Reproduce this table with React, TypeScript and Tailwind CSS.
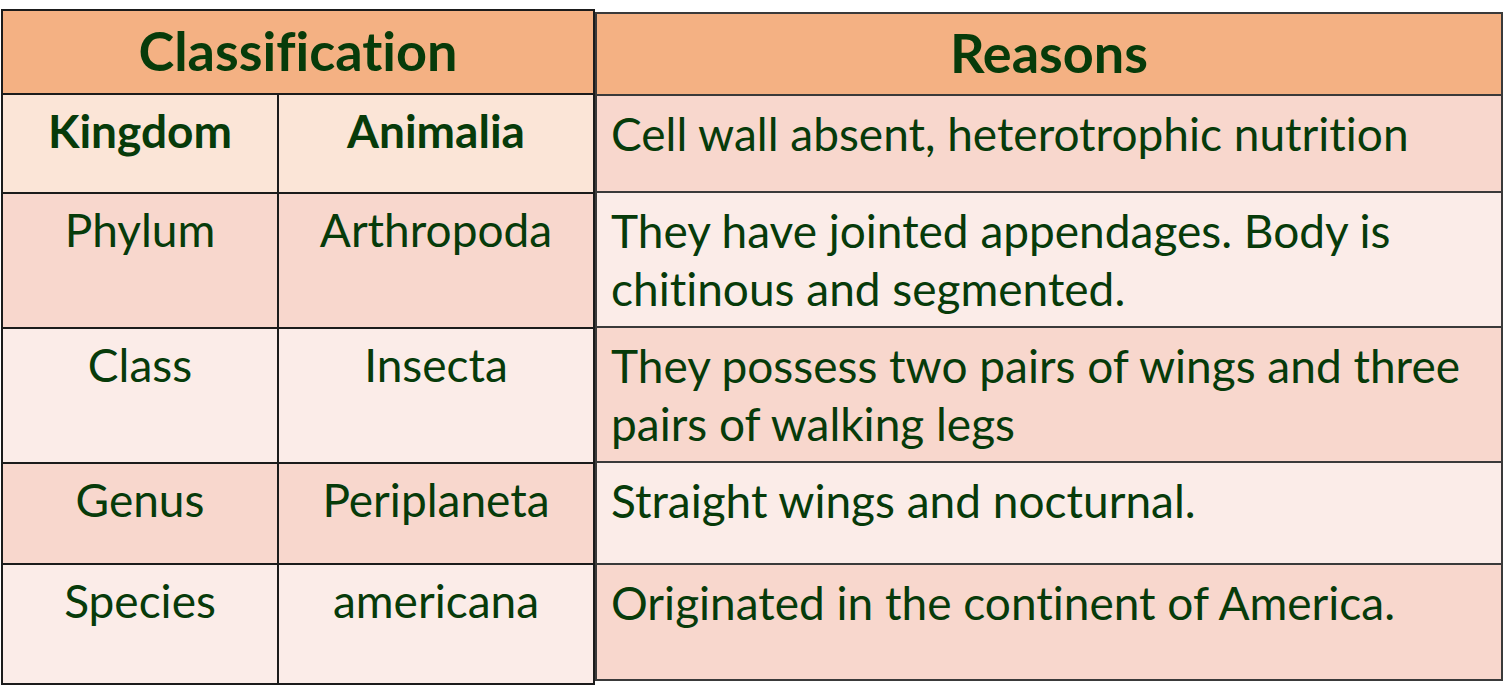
import React from "react";

type Row = {
  rank: string;
  name: string;
  reason: string[];
  bg: string;
  leftH: string;
  rightH: string;
  bold?: boolean;
};

const PINK = "bg-[#f8d7cd]";
const LIGHT = "bg-[#fbece8]";

// heights include the 2px bottom border (border-box)
const rows: Row[] = [
  { rank: "Kingdom", name: "Animalia", reason: ["Cell wall absent, heterotrophic nutrition"], bg: "bg-[#fbe5d7]", leftH: "h-[99px]", rightH: "h-[97px]", bold: true },
  { rank: "Phylum", name: "Arthropoda", reason: ["They have jointed appendages. Body is", "chitinous and segmented."], bg: PINK, leftH: "h-[135px]", rightH: "h-[135px]" },
  { rank: "Class", name: "Insecta", reason: ["They possess two pairs of wings and three", "pairs of walking legs"], bg: LIGHT, leftH: "h-[135px]", rightH: "h-[135px]" },
  { rank: "Genus", name: "Periplaneta", reason: ["Straight wings and nocturnal."], bg: PINK, leftH: "h-[101px]", rightH: "h-[102px]" },
  { rank: "Species", name: "americana", reason: ["Originated in the continent of America."], bg: LIGHT, leftH: "h-[118px]", rightH: "h-[114px]" },
];

// right column colours alternate differently from the left one
const reasonBg = [PINK, LIGHT, PINK, LIGHT, PINK];

export default function App() {
  return (
    <div className="w-[1504px] h-[688px] bg-white overflow-hidden flex items-start pl-px text-[#073b0a] font-['Lato',sans-serif] [font-variant-ligatures:none]">
      {/* Classification table */}
      <div className="mt-[9px] w-[594px] border-2 border-[#1b1b1b] flex flex-col">
        <div className="h-[84px] border-b-2 border-[#1b1b1b] bg-[#f4b183] flex items-center justify-center">
          <span className="text-[54px] font-bold leading-none pb-[2px]">Classification</span>
        </div>
        {rows.map((r, i) => (
          <div
            key={r.rank}
            className={`flex ${r.leftH} ${r.bg} ${i < rows.length - 1 ? "border-b-2 border-[#1b1b1b]" : ""}`}
          >
            <div className={`w-[276px] border-r-2 border-[#1b1b1b] text-center pt-[7px] text-[46px] leading-[58px] ${r.bold ? "font-bold" : ""}`}>
              {r.rank}
            </div>
            <div className={`flex-1 text-center pt-[7px] text-[46px] leading-[58px] ${r.bold ? "font-bold" : ""}`}>
              {r.name}
            </div>
          </div>
        ))}
      </div>

      {/* Reasons table */}
      <div className="mt-[12px] w-[908px] border-2 border-[#3a3a3a] flex flex-col">
        <div className="h-[82px] border-b-2 border-[#3a3a3a] bg-[#f4b183] flex items-center justify-center">
          <span className="text-[54px] font-bold leading-none pb-[2px]">Reasons</span>
        </div>
        {rows.map((r, i) => (
          <div
            key={r.rank}
            className={`${r.rightH} ${reasonBg[i]} ${i < rows.length - 1 ? "border-b-2 border-[#3a3a3a]" : ""} pl-[14px] pt-[9px] text-[46px] leading-[58px] whitespace-nowrap`}
          >
            {r.reason.map((line) => (
              <div key={line}>{line}</div>
            ))}
          </div>
        ))}
      </div>
    </div>
  );
}
